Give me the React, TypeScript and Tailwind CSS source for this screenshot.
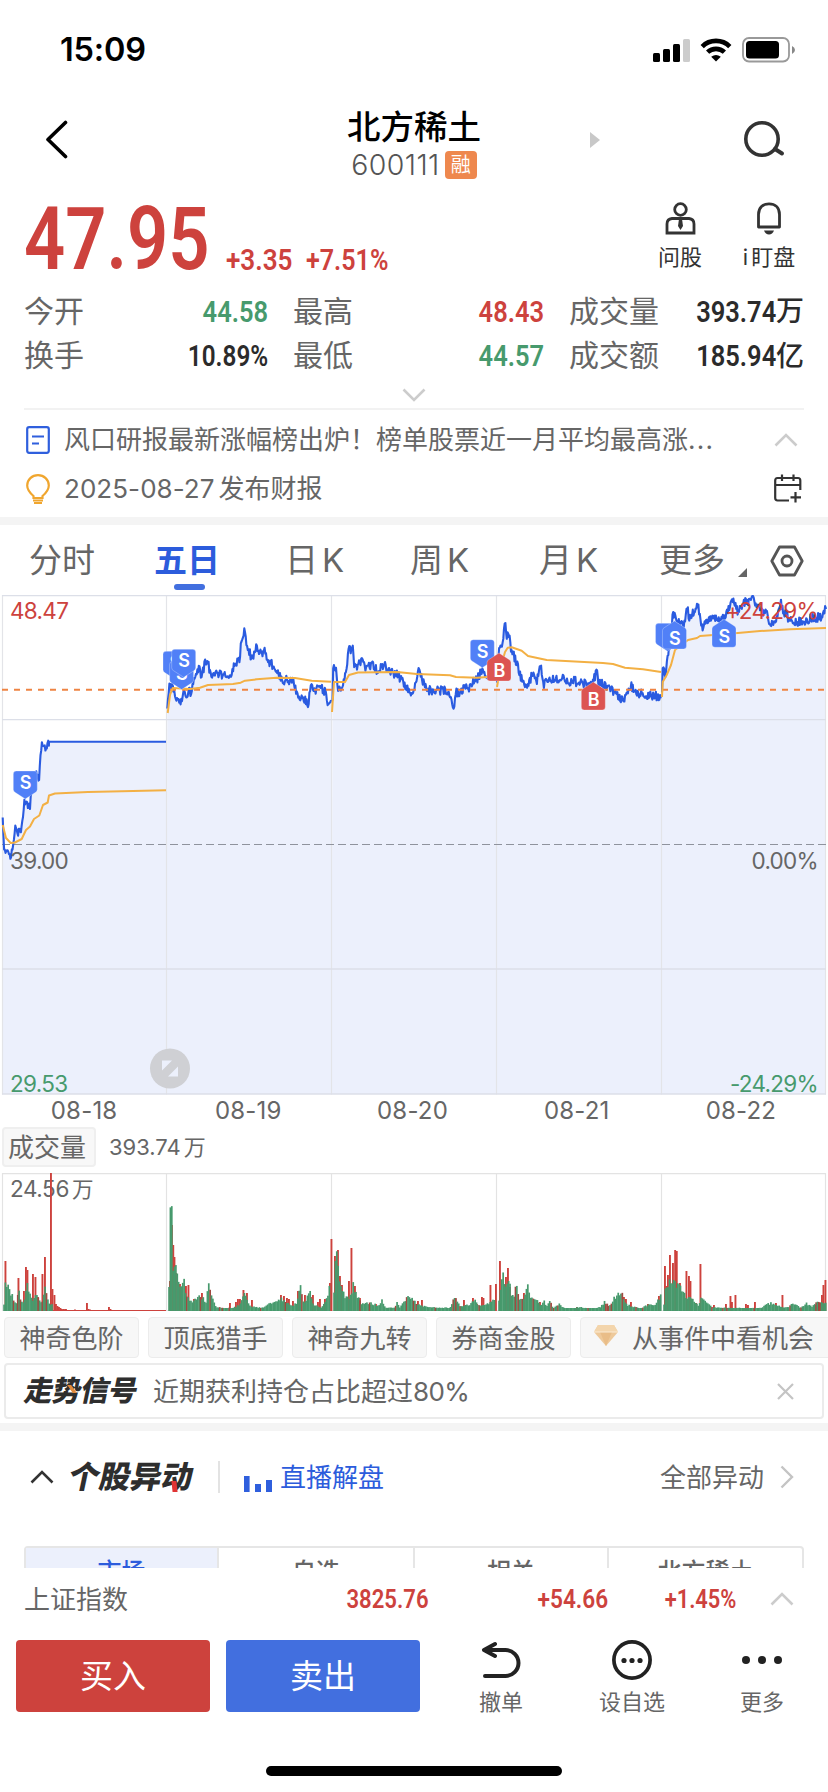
import type { ReactNode } from 'react';
import clsx from 'clsx';

type Point = [number, number];

const quotes = [
  { label: '今开', value: '44.58', color: 'text-[#479a6d]' },
  { label: '最高', value: '48.43', color: 'text-[#cd423d]' },
  { label: '成交量', value: '393.74', unit: '万', color: 'text-[#2b2b2b]' },
  { label: '换手', value: '10.89%', color: 'text-[#2b2b2b]' },
  { label: '最低', value: '44.57', color: 'text-[#479a6d]' },
  { label: '成交额', value: '185.94', unit: '亿', color: 'text-[#2b2b2b]' },
];

const tags = ['神奇色阶', '顶底猎手', '神奇九转', '券商金股'];
const dates = ['08-18', '08-19', '08-20', '08-21', '08-22'];
const gridX = [2.5, 166.5, 331.5, 496.5, 661.5, 825.5];

// price line per trading day, in chart pixels
const prices: Point[][] = [
  [[2.7, 227], [4, 253], [7, 257], [10, 262], [13, 250], [15.7, 230], [18, 238], [21, 237], [24.3, 208], [30, 210], [31, 197], [36, 177], [39, 183], [40.7, 157], [42, 146], [44, 153], [47.5, 152], [49, 146.7]],
  [[167.3, 118], [169.5, 87], [175, 100], [181, 109], [183, 100], [191.7, 96], [195, 80], [199, 74], [201.7, 81], [205.7, 65], [208, 68], [210.7, 79], [220, 80], [226.7, 78], [231.7, 80], [235, 68], [239, 66], [242.5, 40], [245, 34], [246.7, 50], [252.3, 65], [256, 52], [259.3, 57], [265, 57], [267.7, 66], [275, 71.7], [281.7, 86], [286.7, 85], [294, 85], [296.7, 100], [299.3, 107], [301.7, 101], [308.3, 108], [310.7, 92], [316.7, 95], [320.7, 92], [325, 97], [328, 107], [331, 105]],
  [[332.5, 110], [333.2, 71], [336, 75], [338.3, 94], [342.3, 95], [346.7, 73], [348.7, 55], [352.7, 54], [354, 68], [357.3, 72], [361, 65], [365, 73], [373.3, 70], [376.7, 75], [384, 70], [390, 77], [398, 80], [405, 90], [411.7, 99], [414.3, 94], [416, 85], [419.7, 72], [422.3, 86], [426.7, 95], [436.7, 96], [443.3, 95], [450.7, 99], [453.7, 112], [456, 97], [460, 98], [465, 91], [468, 96], [471.7, 87], [476.7, 85], [482.3, 75], [488, 80], [496, 77]],
  [[497, 92], [499.3, 50], [501, 56], [505.3, 28], [507, 42], [508.3, 35], [511, 53], [516.7, 68], [521, 82], [525, 95], [528, 87], [533, 80], [537, 87], [540.3, 68], [543, 89], [556.7, 83], [563, 84], [568, 88], [573, 85], [580, 89], [593, 87], [597, 76], [598, 87], [610, 93], [618, 101], [623, 106], [627, 95], [631, 91], [637, 98], [642, 98], [645, 104], [650, 100], [661, 102]],
  [[662, 102], [663, 65], [665, 82], [668, 57], [670.7, 47], [673, 16], [676.7, 27], [684, 30], [687, 12], [689, 22], [692.7, 18], [698, 9], [700, 23], [703, 34], [706.7, 26], [718, 23], [725, 22], [730, 12], [734, 4], [738, 19], [743, 8], [753, 4], [758, 13], [767, 20], [770, 32], [775, 25], [781, 8], [784, 17], [790, 25], [805, 28], [810, 23], [821.7, 22], [824, 15], [826, 14]],
];

const averages: Point[][] = [
  [[2.7, 230], [6, 243], [10.7, 248], [15, 247.5], [21.7, 244], [26, 235], [30, 231.5], [34, 224], [39.3, 220.5], [43, 210], [47.7, 207.5], [49, 200.5], [55, 198.5], [88, 197], [133, 196], [166, 195.3]],
  [[167.7, 118], [170, 100], [172.7, 93], [190, 94], [200, 92.7], [208, 90], [233, 89], [240.7, 87.7], [245, 85.7], [256.7, 84.3], [276.7, 82.7], [295, 83], [311.7, 85.7], [331, 86.7]],
  [[332, 117], [334, 87], [345, 87], [349, 80], [358, 77.5], [397, 77], [416.7, 79], [450, 80.3], [456, 82], [477, 82.7], [487, 82]],
  [[497, 92], [500, 75], [505, 57], [507.7, 52.7], [511.7, 52.3], [521.7, 55.7], [528, 61], [546.7, 65], [603, 68], [613, 69], [625, 72.7], [643, 74.3], [661, 77]],
  [[662, 102], [662.7, 87], [666.7, 80], [671, 70], [675, 55], [688, 45], [697, 43], [700, 41], [726.7, 39], [760, 36], [790, 34.3], [826, 33]],
];

const downVolume: Point[][] = [
  [[4, 8], [5.5, 33], [8, 24], [10, 18], [13, 15], [15, 8], [17, 9], [19, 24], [21, 10], [23, 7], [26, 18], [28, 28], [30, 16], [33, 9], [36, 22], [38, 14], [41, 8], [43, 12], [45, 29], [47, 12], [50, 8], [52, 7]],
  [[169, 30], [169.8, 101], [171.6, 101], [173, 46], [177, 38], [180, 25], [182, 20], [184, 36], [186, 17], [190, 9], [196, 12], [201, 15], [206, 9], [208.5, 28], [211, 18], [215, 5], [222, 3], [232, 3], [240, 6], [245, 18], [250, 5], [262, 3], [270, 8], [281, 13], [290, 6], [297, 7], [300, 29], [303, 9], [306, 9], [309, 22], [313, 6], [322, 4], [327, 14], [330, 27]],
  [[334, 23], [336.5, 62], [340, 26], [345, 15], [350, 12], [353, 28], [357, 15], [362, 7], [372, 8], [379, 5], [382, 12], [385, 4], [395, 3], [397, 9], [400, 3], [407, 15], [412, 13], [420, 5], [430, 4], [450, 3], [454, 15], [460, 5], [470, 6], [474, 12], [480, 5], [493, 10], [495, 10]],
  [[499, 13], [502, 37], [504, 33], [506, 26], [508.5, 36], [511, 17], [514, 14], [516.3, 27], [519, 12], [524, 13], [528.5, 26], [531, 12], [537, 12], [541, 5], [544, 11], [546, 4], [549.5, 12], [553, 3], [560, 7], [565, 2], [582, 4], [590, 2], [600, 4], [605, 10], [609, 4], [613, 12], [617, 15], [620.5, 20], [624, 12], [628, 6], [640, 3], [650, 7], [655, 5], [661, 17]],
  [[664, 8], [666, 30], [669, 26], [671, 35], [675, 30], [679, 26], [684, 18], [687, 12], [690, 14], [695, 8], [698, 6], [701, 12], [706, 10], [712, 4], [720, 3], [740, 3], [760, 3], [770, 8], [778, 6], [785, 3], [795, 8], [800, 3], [806, 8], [812, 4], [818, 10], [823, 8], [826, 10]],
];

const upVolume: Point[] = [
  [5.5, 50], [18.5, 33], [24, 20], [26, 44], [27.5, 41], [33, 37], [35.5, 34], [38, 14], [42.5, 37], [45, 54], [51, 138], [52.5, 22], [54.5, 16], [56, 7], [57.5, 5], [59, 4], [60.5, 3], [62, 2], [64, 2], [66, 2], [75, 1.5], [87, 8], [88.5, 2], [90, 1.5], [109, 4], [110.5, 2],
  [170, 30], [172, 86], [173.3, 66], [174.5, 54], [176, 38], [180, 27], [186, 25], [188.5, 26], [194, 12], [202, 18], [230, 8], [236, 9], [238, 12], [240, 12], [243.5, 21], [247, 18], [252, 11], [281, 16], [284, 15], [287, 13], [289, 12], [293, 10], [298, 20], [305, 16], [311, 14], [313, 16], [318, 9], [320, 12], [325, 12], [330, 28], [331.5, 72],
  [335, 55], [338, 61], [340, 35], [342, 26], [349, 30], [351.5, 63], [355, 25], [360, 13], [370, 6], [376, 7], [418, 10], [422, 11], [455, 13], [457, 8], [464, 11], [473, 13], [477, 7], [482, 14], [483.5, 13], [490.5, 26], [496, 27],
  [500, 50], [506, 34], [508, 43], [510, 24], [524, 18], [531, 12], [540, 9], [577, 4], [605, 5], [624, 14], [626, 12], [631, 9], [648, 7], [659, 15],
  [665, 45], [666.5, 25], [668, 36], [670, 56], [673, 48], [675.2, 61], [676.8, 60], [680, 28], [686.5, 40], [689, 35], [690.5, 30], [696, 8], [700.5, 47], [714, 6], [726, 7], [730.5, 15], [732, 9], [735.5, 16], [746, 7], [748, 6], [755, 9], [776, 8], [782.5, 16], [795, 5], [815, 6], [819, 8], [822, 16], [823.5, 26], [825.5, 31],
];

const makeRandom = (seed: number) => {
  let s = seed;
  return () => {
    s = (s * 16807) % 2147483647;
    return s / 2147483647;
  };
};

const heightAt = (points: Point[], x: number) => {
  for (let i = 1; i < points.length; i++) {
    const [x0, y0] = points[i - 1];
    const [x1, y1] = points[i];
    if (x <= x1) return y0 + ((y1 - y0) * (x - x0)) / (x1 - x0);
  }
  return points[points.length - 1][1];
};

// fills the gaps between the key prices with minute to minute noise
const withNoise = (points: Point[], seed: number): Point[] => {
  const random = makeRandom(seed);
  const result: Point[] = [];
  const end = points[points.length - 1][0];
  for (let x = points[0][0]; x < end; x += 0.7) {
    result.push([x, Math.max(1, heightAt(points, x) + (random() - 0.5) * 9)]);
  }
  result.push(points[points.length - 1]);
  return result;
};

const toLine = (points: Point[]) => points.map(([x, y]) => `${x.toFixed(1)},${y.toFixed(1)}`).join(' ');

const priceLines = prices.map((day, i) => {
  const line = withNoise(day, 71 + i * 13);
  if (i === 0) line.push([166, 146.7]);
  return line;
});

const volumeBars = downVolume.flatMap((day, i) => {
  const random = makeRandom(19 + i * 7);
  const bars: { x: number; h: number; up: boolean }[] = [];
  for (let x = day[0][0]; x <= day[day.length - 1][0]; x += 1.37) {
    bars.push({ x, h: Math.max(3, heightAt(day, x) * (0.8 + random() * 0.35)), up: random() < 0.13 });
  }
  return bars;
});

function Din({ children, className }: { children: ReactNode; className?: string }) {
  return <span className={clsx('inline-block whitespace-nowrap font-[Roboto] font-semibold', className)}>{children}</span>;
}

function Chevron({ d, className }: { d: string; className?: string }) {
  return (
    <svg className={className} viewBox="0 0 24 14" fill="none" stroke="currentColor" strokeWidth="2.6">
      <path d={d} />
    </svg>
  );
}

function Marker({ x, y, type, up, blank }: { x: number; y: number; type: 'S' | 'B'; up?: boolean; blank?: boolean }) {
  // y is the top edge of the marker, arrow included
  return (
    <g transform={`translate(${x - 12} ${y})`}>
      <path
        d={up
          ? 'M12 0L22 6.5Q24 7.5 24 9.5V25Q24 28 21 28H3Q0 28 0 25V9.5Q0 7.5 2 6.5Z'
          : 'M3 0H21Q24 0 24 3V18.500Q24 20.500 22 21.500L12 28L2 21.500Q0 20.500 0 18.500V3Q0 0 3 0Z'}
        fill={type === 'S' ? '#5180f7' : '#dc5452'}
        stroke="#fff"
        strokeOpacity="0.35"
        strokeWidth="0.8"
      />
      {!blank && (
        <text x="12" y={up ? 23.500 : 18} textAnchor="middle" fontSize="18" fontWeight="600" fontFamily="Inter" fill="#fff">
          {type}
        </text>
      )}
    </g>
  );
}

function StatusBar() {
  return (
    <div className="flex h-[100px] shrink-0 items-center justify-between pl-[60px] pr-[33px]">
      <span className="text-[32.500px] font-semibold tracking-[-0.2px] text-black">15:09</span>
      <div className="flex items-center">
        <svg className="h-[23px] w-[37px]" viewBox="0 0 37 23">
          <rect x="0" y="14" width="7" height="9" rx="1.500" />
          <rect x="10" y="10" width="7" height="13" rx="1.500" />
          <rect x="20" y="5" width="7" height="18" rx="1.500" />
          <rect x="30" y="0" width="7" height="23" rx="1.500" fill="#ccc" />
        </svg>
        <svg className="ml-2.5 h-6 w-8" viewBox="0 0 32 24" fill="none" stroke="#000" strokeWidth="4.600">
          <path d="M2.200 8.600C9.700 1 22.300 1 29.800 8.600" />
          <path d="M7.600 14.200C12.300 9.700 19.700 9.700 24.400 14.200" />
          <path d="M16 23.500L11.200 18.800Q16 15 20.800 18.800Z" fill="#000" stroke="none" />
        </svg>
        <svg className="ml-2.5 h-[26px] w-[53px]" viewBox="0 0 53 26">
          <rect x="1" y="1" width="46" height="23.500" rx="6" fill="none" stroke="#999" strokeWidth="1.800" />
          <rect x="4" y="4" width="33" height="17.500" rx="3.500" />
          <path d="M50 9Q53 10.500 53 13T50 17Z" fill="#888" />
        </svg>
      </div>
    </div>
  );
}

function Header() {
  return (
    <div className="relative h-[90px] shrink-0 pt-1.5">
      <div className="text-center text-[33.500px] font-medium leading-[42px] text-black">北方稀土</div>
      <div className="flex h-[34px] items-center justify-center">
        <span className="text-[28.500px] font-light tracking-[0.4px] text-[#555]">600111</span>
        <span className="ml-[5px] flex h-7 w-8 items-center justify-center rounded bg-[#ee884e] text-[20px] text-white">融</span>
      </div>
      <svg className="absolute left-[44px] top-[20px] h-[39px] w-[26px]" viewBox="0 0 26 39" fill="none" stroke="#000" strokeWidth="3.600" strokeLinecap="round" strokeLinejoin="round">
        <path d="M21.500 2.500L4 19.500L21.500 36.500" />
      </svg>
      <svg className="absolute left-[590px] top-[32px] h-4 w-[10px]" viewBox="0 0 10 16">
        <path d="M0 0L10 8L0 16Z" fill="#c8c8c8" />
      </svg>
      <svg className="absolute left-[743px] top-[20px] h-[40px] w-[42px]" viewBox="0 0 42 40" fill="none" stroke="#333" strokeWidth="3.600">
        <circle cx="19" cy="19" r="16.200" />
        <path d="M32 29L39 33.500" strokeWidth="4" strokeLinecap="round" />
      </svg>
    </div>
  );
}

function Price() {
  return (
    <div className="flex h-[96px] shrink-0 pl-6 text-[#cd423d]">
      <div className="w-[202px] pt-[7px]">
        <Din className="origin-left scale-x-[0.83] text-[87px] leading-[84px]">47.95</Din>
      </div>
      <div className="w-[80px] pt-[50px]">
        <Din className="origin-left scale-x-[0.9] text-[29px] leading-[40px]">+3.35</Din>
      </div>
      <div className="w-[330px] pt-[50px]">
        <Din className="origin-left scale-x-[0.865] text-[29px] leading-[40px]">+7.51%</Din>
      </div>
      <div className="flex w-[88px] flex-col items-center pt-3 text-[#333]">
        <svg className="h-[33px] w-[31px]" viewBox="0 0 31 33" fill="none" stroke="#333" strokeWidth="2.800">
          <circle cx="15.500" cy="7.500" r="5.800" />
          <path d="M7 16.500H24Q29 17 29 22V31H2V22Q2 17 7 16.500Z" />
          <path d="M14 17H17L18 24L15.500 28L13 24Z" fill="#333" stroke="none" />
        </svg>
        <span className="mt-[5px] text-[22px] leading-[34px]">问股</span>
      </div>
      <div className="flex w-[90px] flex-col items-center pt-3 text-[#333]">
        <svg className="h-[33px] w-[26px]" viewBox="0 0 26 33" fill="none" stroke="#333" strokeWidth="2.800">
          <path d="M2.500 25V12.500C2.500 5.500 7 1.800 13 1.800S23.500 5.500 23.500 12.500V25Z" strokeLinejoin="round" />
          <path d="M8 28.500H18Q16.500 32.500 13 32.500T8 28.500Z" fill="#333" stroke="none" />
        </svg>
        <span className="mt-[5px] text-[22px] leading-[34px]"><span className="mr-[3px]">i</span>盯盘</span>
      </div>
    </div>
  );
}

function Quotes() {
  return (
    <div className="shrink-0">
      <div className="grid h-[92px] grid-cols-[244px_251px_235px] gap-x-[25px] gap-y-0 px-6 pt-[3px]">
        {quotes.map((q) => (
          <div key={q.label} className="flex h-[44px] items-center justify-between text-[30px] text-[#666]">
            <span>{q.label}</span>
            <span className={clsx('flex items-center', q.color)}>
              <Din className={clsx('origin-right text-[30px]', q.value.endsWith('%') ? 'scale-x-[0.81]' : 'scale-x-[0.85]')}>{q.value}</Din>
              {q.unit && <span className="text-[28px] font-medium">{q.unit}</span>}
            </span>
          </div>
        ))}
      </div>
      <div className="mx-6 flex h-[32px] justify-center border-b-2 border-[#f2f2f2] pt-[10px]">
        <Chevron d="M1.500 1.500L12 12L22.500 1.500" className="h-[14px] w-[24px] text-[#ccc]" />
      </div>
    </div>
  );
}

function Notices() {
  return (
    <div className="h-[107px] shrink-0 px-6 pt-[5px] text-[26px] text-[#666]">
      <div className="flex h-[49px] items-center">
        <svg className="mx-0.5 h-[28px] w-[24px]" viewBox="0 0 24 28" fill="none" stroke="#2f5fdd" strokeWidth="2.200">
          <rect x="1.200" y="1.200" width="21.600" height="25.600" rx="2" />
          <path d="M6 10.500H18M6 17.500H13" />
        </svg>
        <span className="ml-[12px]">风口研报最新涨幅榜出炉！榜单股票近一月平均最高涨<span className="tracking-[1.200px]">...</span></span>
        <Chevron d="M1.500 12.500L12 2L22.500 12.500" className="ml-auto mr-[6px] h-[14px] w-[24px] text-[#ccc]" />
      </div>
      <div className="flex h-[49px] items-center">
        <svg className="mx-0.5 h-[30px] w-[24px]" viewBox="0 0 24 30" fill="none" stroke="#f0a62f" strokeWidth="2.200">
          <path d="M7.500 24V22C4 19 1.200 16 1.200 11.500C1.200 5.500 6 1.200 12 1.200S22.800 5.500 22.800 11.500C22.800 16 20 19 16.500 22V24Z" />
          <path d="M7 26.500H17M8 29H16" strokeWidth="1.800" />
        </svg>
        <span className="ml-[12px]"><span className="mr-1 tracking-[0.050px]">2025-08-27</span>发布财报</span>
        <svg className="ml-auto mr-[2px] h-[29px] w-[28px]" viewBox="0 0 28 29" fill="none" stroke="#333" strokeWidth="2.200">
          <path d="M15 26.500H3.500Q1.200 26.500 1.200 24V6.500Q1.200 4 3.500 4H24Q26.300 4 26.300 6.500V16M1.200 11H26.300M8 0.500V7M19.500 0.500V7" />
          <path d="M21.500 18V28.500M16.500 23.300H27" />
        </svg>
      </div>
    </div>
  );
}

function Tabs() {
  return (
    <div className="flex h-[70px] shrink-0 items-center pt-[2px] text-[33px] text-[#666]">
      <div className="w-[125px] pl-[29px]">分时</div>
      <div className="relative w-[125px] pl-[29px] font-bold text-[#2c5cdc]">
        五日
        <span className="absolute left-[49px] top-[48px] h-[6px] w-[31px] rounded-full bg-[#426fdf]" />
      </div>
      <div className="w-[125px] pl-[35px]">日<span className="ml-[4px]">K</span></div>
      <div className="w-[125px] pl-[35px]">周<span className="ml-[4px]">K</span></div>
      <div className="w-[125px] pl-[39px]">月<span className="ml-[4px]">K</span></div>
      <div className="w-[113px] pl-[34px]">更多</div>
      <svg className="mt-[22px] h-[9px] w-[9px]" viewBox="0 0 9 9"><path d="M9 0V9H0Z" fill="#666" /></svg>
      <svg className="ml-[23px] h-[32px] w-[34px]" viewBox="0 0 34 32" fill="none" stroke="#555" strokeWidth="2.800" strokeLinejoin="round">
        <path d="M9.500 2H24.500L32.200 16L24.500 30H9.500L1.800 16Z" />
        <circle cx="17" cy="16" r="5" />
      </svg>
    </div>
  );
}

function PriceChart() {
  return (
    <div className="relative h-[500px] shrink-0 text-[22.500px] leading-[28px] tracking-[-0.700px] text-[#666]">
      <svg className="h-[500px] w-[828px]" viewBox="0 0 828 500" fill="none">
        {priceLines.map((line, i) => (
          <polygon key={i} points={`${gridX[i]},499 ${toLine(line)} ${gridX[i + 1]},${line[line.length - 1][1]} ${gridX[i + 1]},499`} fill="#ecf0fc" />
        ))}
        {gridX.map((x) => <path key={x} d={`M${x} 0V499.500`} stroke="#e3e4e8" strokeWidth="1.200" />)}
        {[0.7, 124.700, 374, 499].map((y) => <path key={y} d={`M2 ${y}H826`} stroke="#dcdfe8" strokeWidth="1.300" />)}
        <path d="M2 249.500H826" stroke="#8f939d" strokeWidth="1.200" strokeDasharray="8 4" />
        {priceLines.map((line, i) => (
          <polyline key={i} points={toLine(line)} stroke="#2a5be0" strokeWidth="2.100" strokeLinejoin="round" />
        ))}
        <path d="M2 94.700H826" stroke="#ee8443" strokeWidth="2" strokeDasharray="6 6" />
        {averages.map((line, i) => (
          <polyline key={i} points={toLine(line)} stroke="#f3b044" strokeWidth="2" strokeLinejoin="round" />
        ))}
        <Marker x={25.300} y={176} type="S" />
        <Marker x={175} y={56.300} type="S" />
        <Marker x={181.600} y={66.500} type="S" />
        <Marker x={183.700} y={54.300} type="S" />
        <Marker x={482.300} y={44.700} type="S" />
        <Marker x={499} y={58} type="B" up />
        <Marker x={593.300} y={87} type="B" up />
        <Marker x={667.500} y={28.300} type="S" blank />
        <Marker x={674.500} y={26} type="S" up />
        <Marker x={724} y={24.300} type="S" up />
        <circle cx="170" cy="473.500" r="20" fill="#cfd0d4" />
        <path d="M162 465.500H172L162 475.500ZM178 481.500H168L178 471.500Z" fill="#ecf0fc" />
      </svg>
      <span className="absolute left-2.5 top-[2px] text-[#cd423d]">48.47</span>
      <span className="absolute right-[10px] top-[2px] text-[#cd423d]">+24.29%</span>
      <span className="absolute left-2.5 top-[252px]">39.00</span>
      <span className="absolute right-[10px] top-[252px]">0.00%</span>
      <span className="absolute left-2.5 top-[475px] text-[#479a6d]">29.53</span>
      <span className="absolute right-[10px] top-[475px] text-[#479a6d]">-24.29%</span>
    </div>
  );
}

function VolumeChart() {
  return (
    <div className="shrink-0">
      <div className="flex h-[31px] items-center pl-[2px] pr-[5px] text-[24px] tracking-[0.200px] text-[#666]">
        {dates.map((date) => (
          <span key={date} className="flex-1 text-center">{date}</span>
        ))}
      </div>
      <div className="flex h-[42px] items-center pl-[2px] text-[#666]">
        <span className="flex h-[40px] w-[94px] items-center rounded border-2 border-[#efefef] bg-[#f8f8f8] pl-[4px] text-[26px]">成交量</span>
        <span className="ml-[13px] text-[22px]">393.74<span className="ml-[3px]">万</span></span>
      </div>
      <div className="relative mt-[5px] h-[138px]">
        <span className="absolute left-2.5 top-[2px] text-[22.500px] leading-[28px] tracking-[-0.400px] text-[#666]">24.56<span className="ml-[3px] text-[21.500px]">万</span></span>
        <svg className="relative h-[138px] w-[828px]" viewBox="0 0 828 138">
          {gridX.map((x) => <path key={x} d={`M${x} 0V138`} stroke="#e3e3e3" strokeWidth="1.200" />)}
          <path d="M2 0.700H826M2 137.500H826" stroke="#e3e3e3" strokeWidth="1.200" />
          <path d="M50 137.500H166" stroke="#cd423d" strokeWidth="1" />
          {upVolume.map(([x, h]) => (
            <rect key={x} x={x - 1} y={138 - h} width="1.900" height={h} fill="#cd423d" />
          ))}
          {volumeBars.map((bar) => (
            <rect key={bar.x} x={bar.x - 0.8} y={138 - bar.h} width="1.700" height={bar.h} fill={bar.up ? '#a04a40' : '#479a6d'} />
          ))}
        </svg>
      </div>
    </div>
  );
}

function Diamond() {
  return (
    <svg className="h-[21px] w-[24px]" viewBox="0 0 24 21">
      <path d="M4 0H20L24 7L12 21L0 7Z" fill="#eec99a" />
      <path d="M4 0H20L24 7H0Z" fill="#f3d5ac" />
      <path d="M6 7H18L12 21Z" fill="#e9bd88" />
      <path d="M0 7H24" stroke="#faebd5" />
    </svg>
  );
}

function Signals() {
  return (
    <div className="h-[112px] shrink-0 pl-1 pt-[6px] text-[26px] text-[#666]">
      <div className="flex gap-[9px]">
        {tags.map((tag) => (
          <span key={tag} className="flex h-[41px] w-[135px] shrink-0 items-center justify-center rounded border border-[#ececec] bg-[#f7f7f7] pt-[1px]">{tag}</span>
        ))}
        <span className="flex h-[41px] w-[260px] shrink-0 items-center rounded border border-[#ececec] bg-[#f7f7f7] pl-[13px] pt-[1px]">
          <span className="-mt-1.5"><Diamond /></span>
          <span className="ml-[14px]">从事件中看机会</span>
        </span>
      </div>
      <div className="mt-[5px] flex h-[56px] w-[820px] items-center rounded border-2 border-[#ebebeb] pl-[19px]">
        <span className="relative w-[112px] whitespace-nowrap text-[28.500px] font-black tracking-[-0.4px] text-[#2e2e2e]">
          <span className="inline-block -skew-x-12">走势信号</span>
          <span className="absolute left-[45px] top-[15px] h-[8px] w-[4px] -skew-x-[-35deg] bg-[#e08a3c]" />
        </span>
        <span className="ml-[16px]">近期获利持仓占比超过<span className="tracking-[-0.600px]">80%</span></span>
        <svg className="ml-auto mr-[28px] h-[17px] w-[17px]" viewBox="0 0 17 17" stroke="#c4c4c4" strokeWidth="2.200">
          <path d="M1 1L16 16M16 1L1 16" />
        </svg>
      </div>
    </div>
  );
}

function Movements() {
  const segments = ['市场', '自选', '相关', '北方稀土'];

  return (
    <div className="h-[137px] shrink-0 overflow-hidden text-[26px] text-[#666]">
      <div className="flex h-[92px] items-center pl-[30px] pr-[34px]">
        <Chevron d="M1.500 12.500L12 2L22.500 12.500" className="h-[14px] w-[24px] text-[#333]" />
        <span className="relative ml-[15px] w-[126px] whitespace-nowrap text-[31px] font-black text-[#2e2e2e]">
          <span className="inline-block -skew-x-12">个股异动</span>
          <span className="absolute left-[103px] top-[27px] h-[11px] w-[5px] skew-x-6 bg-[#e03434]" />
        </span>
        <span className="ml-[23px] h-8 w-[2px] bg-[#e3e3e3]" />
        <svg className="ml-[24px] mt-[13px] h-4 w-7" viewBox="0 0 28 16" fill="#2f5fdd">
          <rect width="5.600" height="16" />
          <rect x="11" y="8" width="6" height="8" />
          <rect x="22" y="4" width="6" height="12" />
        </svg>
        <span className="ml-[8px] text-[#2c5cdc]">直播解盘</span>
        <span className="ml-auto">全部异动</span>
        <svg className="ml-[16px] h-[24px] w-[14px]" viewBox="0 0 14 24" fill="none" stroke="#c4c4c4" strokeWidth="2.400">
          <path d="M1.500 1.500L12 12L1.500 22.500" />
        </svg>
      </div>
      <div className="mx-6 mt-[23px] grid h-[60px] grid-cols-[191px_196px_194px_1fr] rounded border-2 border-[#e6e6e6] text-[24px] font-medium">
        {segments.map((segment, i) => (
          <span key={segment} className={clsx('flex justify-center pt-[6px]', i === 0 ? 'bg-[#ecf0fc] text-[#2c5cdc]' : 'border-l-2 border-[#e6e6e6]')}>
            {segment}
          </span>
        ))}
      </div>
    </div>
  );
}

function IndexBar() {
  return (
    <div className="flex h-[62px] shrink-0 items-center bg-white px-6 text-[#cd423d]">
      <span className="w-[180px] text-[26px] text-[#666]">上证指数</span>
      <span className="flex w-[225px] justify-end">
        <Din className="origin-right scale-x-[0.85] text-[26px]">3825.76</Din>
      </span>
      <span className="flex w-[179px] justify-end">
        <Din className="origin-right scale-x-[0.87] text-[26px]">+54.66</Din>
      </span>
      <span className="flex w-[128px] justify-end">
        <Din className="origin-right scale-x-[0.84] text-[26px]">+1.45%</Din>
      </span>
      <Chevron d="M1.500 12.500L12 2L22.500 12.500" className="ml-[34px] h-[14px] w-[24px] text-[#ccc]" />
    </div>
  );
}

function ActionBar() {
  return (
    <div className="flex h-[126px] shrink-0 bg-white pl-4 pt-[10px] text-[22px] leading-[30px] text-[#666]">
      <button className="h-[72px] w-[194px] rounded bg-[#cd423d] text-[33px] text-white">买入</button>
      <button className="ml-4 h-[72px] w-[194px] rounded bg-[#426fdf] text-[33px] text-white">卖出</button>
      <div className="ml-[16px] flex w-[130px] flex-col items-center">
        <svg className="h-10 w-10" viewBox="0 0 40 40" fill="none" stroke="#222" strokeWidth="4" strokeLinecap="round" strokeLinejoin="round">
          <path d="M14 4L3 10L14 16M3 10H24.500A13 13 0 0 1 24.500 36H4" />
        </svg>
        <span className="mt-[7px]">撤单</span>
      </div>
      <div className="flex w-[132px] flex-col items-center">
        <svg className="h-10 w-10" viewBox="0 0 40 40" fill="#222">
          <circle cx="20" cy="20" r="18.100" fill="none" stroke="#222" strokeWidth="3.700" />
          <circle cx="12" cy="20.500" r="2.600" />
          <circle cx="20" cy="20.500" r="2.600" />
          <circle cx="28" cy="20.500" r="2.600" />
        </svg>
        <span className="mt-[7px]">设自选</span>
      </div>
      <div className="flex w-[128px] flex-col items-center">
        <svg className="h-10 w-10" viewBox="0 0 40 40" fill="#222">
          <circle cx="4" cy="20" r="4" />
          <circle cx="20" cy="20" r="4" />
          <circle cx="36" cy="20" r="4" />
        </svg>
        <span className="mt-[7px]">更多</span>
      </div>
    </div>
  );
}

export default function App() {
  return (
    <div className="flex h-[1792px] w-[828px] flex-col overflow-hidden bg-white font-[Inter,'Noto_Sans_CJK_SC',sans-serif]">
      <StatusBar />
      <Header />
      <Price />
      <Quotes />
      <Notices />
      <div className="h-[8px] shrink-0 bg-[#f4f4f4]" />
      <Tabs />
      <PriceChart />
      <VolumeChart />
      <Signals />
      <div className="h-[8px] shrink-0 bg-[#f4f4f4]" />
      <Movements />
      <IndexBar />
      <ActionBar />
      <div className="mt-[10px] h-[10px] w-[296px] shrink-0 self-center rounded-full bg-black" />
    </div>
  );
}
